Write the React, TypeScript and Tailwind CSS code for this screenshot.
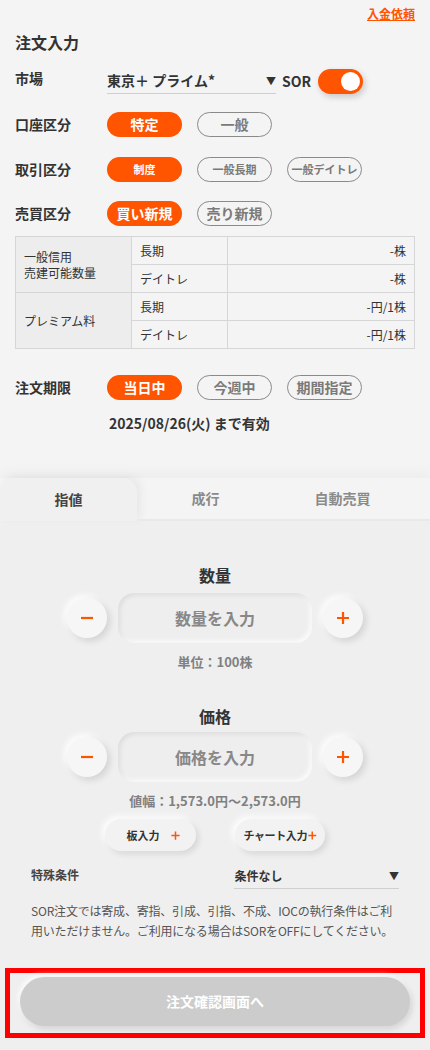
import React from 'react';

const font = { fontFamily: '"Noto Sans CJK JP", "Noto Sans", sans-serif' };

type PillProps = { label: string; active?: boolean; small?: boolean };

function Pill({ label, active, small }: PillProps) {
  return (
    <div
      className={
        active
          ? 'flex h-[25px] w-[75px] items-center justify-center rounded-full bg-[#ff5500] font-bold text-white'
          : 'flex h-[25px] w-[75px] items-center justify-center rounded-full border border-[#8a8a8a] font-bold text-[#7a7a7a]'
      }
    >
      <span className={small ? 'text-[11px] leading-none' : 'text-[14px] leading-none'}>{label}</span>
    </div>
  );
}

function Row({ label, children }: { label: string; children: React.ReactNode }) {
  return (
    <div className="flex h-[26px] items-center">
      <div className="w-[92px] text-[14px] font-bold text-[#333]">{label}</div>
      <div className="flex gap-[15px]">{children}</div>
    </div>
  );
}

function Minus() {
  return (
    <svg width="16" height="16" viewBox="0 0 16 16">
      <path d="M2 8h12" stroke="#ff5500" strokeWidth="2.2" />
    </svg>
  );
}

function Plus({ size = 16 }: { size?: number }) {
  return (
    <svg width={size} height={size} viewBox="0 0 16 16">
      <path d="M2 8h12M8 2v12" stroke="#ff5500" strokeWidth="2.2" />
    </svg>
  );
}

function Stepper({ placeholder }: { placeholder: string }) {
  return (
    <div className="flex items-center justify-center gap-[11px]">
      <button className="flex h-[40px] w-[40px] items-center justify-center rounded-full bg-[#f6f6f6] shadow-[3px_3px_7px_rgba(0,0,0,0.12),-3px_-3px_6px_rgba(255,255,255,0.9)]">
        <Minus />
      </button>
      <div className="flex h-[50px] w-[194px] items-center justify-center rounded-[16px] bg-[#eeeeee] text-[16px] font-bold text-[#888] shadow-[inset_2px_2px_5px_rgba(0,0,0,0.08),inset_-2px_-2px_5px_rgba(255,255,255,0.9)]">
        {placeholder}
      </div>
      <button className="flex h-[40px] w-[40px] items-center justify-center rounded-full bg-[#f6f6f6] shadow-[3px_3px_7px_rgba(0,0,0,0.12),-3px_-3px_6px_rgba(255,255,255,0.9)]">
        <Plus />
      </button>
    </div>
  );
}

export default function App() {
  return (
    <div className="min-h-[1050px] w-[430px] bg-[#f4f4f4]" style={font}>
      <div className="flex flex-col px-[15px]">
        <div className="flex h-[28px] items-center justify-end">
          <span className="text-[12px] font-bold text-[#ff5500] underline">入金依頼</span>
        </div>
        <div className="flex h-[28px] items-center text-[16px] font-bold text-[#333]">注文入力</div>

        <div className="mt-[8px] flex h-[34px] items-center">
          <div className="w-[92px] self-start pt-[4px] text-[14px] font-bold text-[#333]">市場</div>
          <div className="flex h-[26px] w-[169px] items-center justify-between border-b border-[#cfcfcf]">
            <span className="text-[14px] font-bold text-[#333]">東京＋ プライム*</span>
            <span className="text-[10px] text-[#333]">▼</span>
          </div>
          <span className="ml-[6px] text-[14px] font-bold text-[#333]">SOR</span>
          <div className="ml-[7px] flex h-[25px] w-[45px] items-center justify-end rounded-full bg-[#ff5500] pr-[3px] shadow-[2px_3px_6px_rgba(0,0,0,0.18)]">
            <div className="h-[19px] w-[19px] rounded-full bg-white" />
          </div>
        </div>

        <div className="mt-[13px]">
          <Row label="口座区分">
            <Pill label="特定" active />
            <Pill label="一般" />
          </Row>
        </div>
        <div className="mt-[19px]">
          <Row label="取引区分">
            <Pill label="制度" active small />
            <Pill label="一般長期" small />
            <Pill label="一般デイトレ" small />
          </Row>
        </div>
        <div className="mt-[18px]">
          <Row label="売買区分">
            <Pill label="買い新規" active />
            <Pill label="売り新規" />
          </Row>
        </div>

        <table className="mt-[10px] w-[400px] border-collapse text-[12px] text-[#333]">
          <tbody>
            <tr className="h-[28px]">
              <td rowSpan={2} className="w-[116px] border border-[#d6d6d6] bg-[#ededed] px-[8px] leading-[16px]">
                一般信用
                <br />
                売建可能数量
              </td>
              <td className="w-[96px] border border-[#d6d6d6] px-[8px]">長期</td>
              <td className="border border-[#d6d6d6] px-[8px] text-right">-株</td>
            </tr>
            <tr className="h-[28px]">
              <td className="border border-[#d6d6d6] px-[8px]">デイトレ</td>
              <td className="border border-[#d6d6d6] px-[8px] text-right">-株</td>
            </tr>
            <tr className="h-[28px]">
              <td rowSpan={2} className="border border-[#d6d6d6] bg-[#ededed] px-[8px]">
                プレミアム料
              </td>
              <td className="border border-[#d6d6d6] px-[8px]">長期</td>
              <td className="border border-[#d6d6d6] px-[8px] text-right">-円/1株</td>
            </tr>
            <tr className="h-[28px]">
              <td className="border border-[#d6d6d6] px-[8px]">デイトレ</td>
              <td className="border border-[#d6d6d6] px-[8px] text-right">-円/1株</td>
            </tr>
          </tbody>
        </table>

        <div className="mt-[25px]">
          <Row label="注文期限">
            <Pill label="当日中" active />
            <Pill label="今週中" />
            <Pill label="期間指定" />
          </Row>
        </div>
        <div className="mt-[13px] pl-[94px] text-[14px] font-bold text-[#333]">2025/08/26(火) まで有効</div>
      </div>

      <div className="mt-[44px] flex h-[43px] items-stretch shadow-[0_-6px_12px_rgba(0,0,0,0.03)]">
        <div className="flex w-[137px] items-center justify-center rounded-tr-[14px] rounded-tl-[14px] bg-[#f0f0f0] text-[14px] font-bold text-[#444] shadow-[4px_-2px_8px_rgba(0,0,0,0.05)]">
          指値
        </div>
        <div className="flex flex-1 items-stretch border-b-[2px] border-[#e9e9e9]">
          <div className="flex w-[137px] items-center justify-center text-[14px] font-bold text-[#8a8a8a]">成行</div>
          <div className="flex w-[137px] items-center justify-center text-[14px] font-bold text-[#8a8a8a]">自動売買</div>
        </div>
      </div>

      <div className="flex flex-col bg-[#efefef] pb-[13px]">
        <div className="mt-[42px] text-center text-[16px] font-bold text-[#333]">数量</div>
        <div className="mt-[6px]">
          <Stepper placeholder="数量を入力" />
        </div>
        <div className="mt-[9px] text-center text-[13px] font-bold text-[#808080]">単位：100株</div>

        <div className="mt-[32px] text-center text-[16px] font-bold text-[#333]">価格</div>
        <div className="mt-[4px]">
          <Stepper placeholder="価格を入力" />
        </div>
        <div className="mt-[9px] text-center text-[13px] font-bold text-[#808080]">値幅：1,573.0円～2,573.0円</div>

        <div className="mt-[9px] flex justify-center gap-[39px] pr-[1px]">
          <div className="flex h-[32px] w-[91px] items-center justify-between whitespace-nowrap rounded-full bg-[#f2f2f2] pl-[22px] pr-[15px] text-[11px] font-bold text-[#333] shadow-[3px_3px_6px_rgba(0,0,0,0.1),-3px_-3px_6px_rgba(255,255,255,0.9)]">
            <span>板入力</span>
            <Plus size={11} />
          </div>
          <div className="flex h-[32px] w-[90px] items-center justify-between whitespace-nowrap rounded-full bg-[#f2f2f2] pl-[9px] pr-[7px] text-[11px] font-bold tracking-[-0.4px] text-[#333] shadow-[3px_3px_6px_rgba(0,0,0,0.1),-3px_-3px_6px_rgba(255,255,255,0.9)]">
            <span>チャート入力</span>
            <Plus size={11} />
          </div>
        </div>

        <div className="mt-[12px] flex items-start px-[31px]">
          <div className="w-[204px] pt-[3px] text-[12px] font-bold text-[#444]">特殊条件</div>
          <div className="flex h-[26px] w-[165px] items-center justify-between border-b border-[#cfcfcf]">
            <span className="text-[12px] font-bold text-[#333]">条件なし</span>
            <span className="text-[10px] text-[#333]">▼</span>
          </div>
        </div>

        <p className="mt-[12px] px-[31px] text-[12px] leading-[19.5px] tracking-[-0.2px] text-[#555]">
          SOR注文では寄成、寄指、引成、引指、不成、IOCの執行条件はご利用いただけません。ご利用になる場合はSORをOFFにしてください。
        </p>

        <div className="mx-[5px] mt-[28px] border-[5px] border-[#ff0000] px-[10px] pb-[7px] pt-[4px]">
          <button className="flex h-[49px] w-full items-center justify-center rounded-full bg-[#cccccc] text-[14px] font-bold text-white shadow-[2px_3px_6px_rgba(0,0,0,0.12),-2px_-2px_5px_rgba(255,255,255,0.9)]">
            注文確認画面へ
          </button>
        </div>
      </div>
    </div>
  );
}
